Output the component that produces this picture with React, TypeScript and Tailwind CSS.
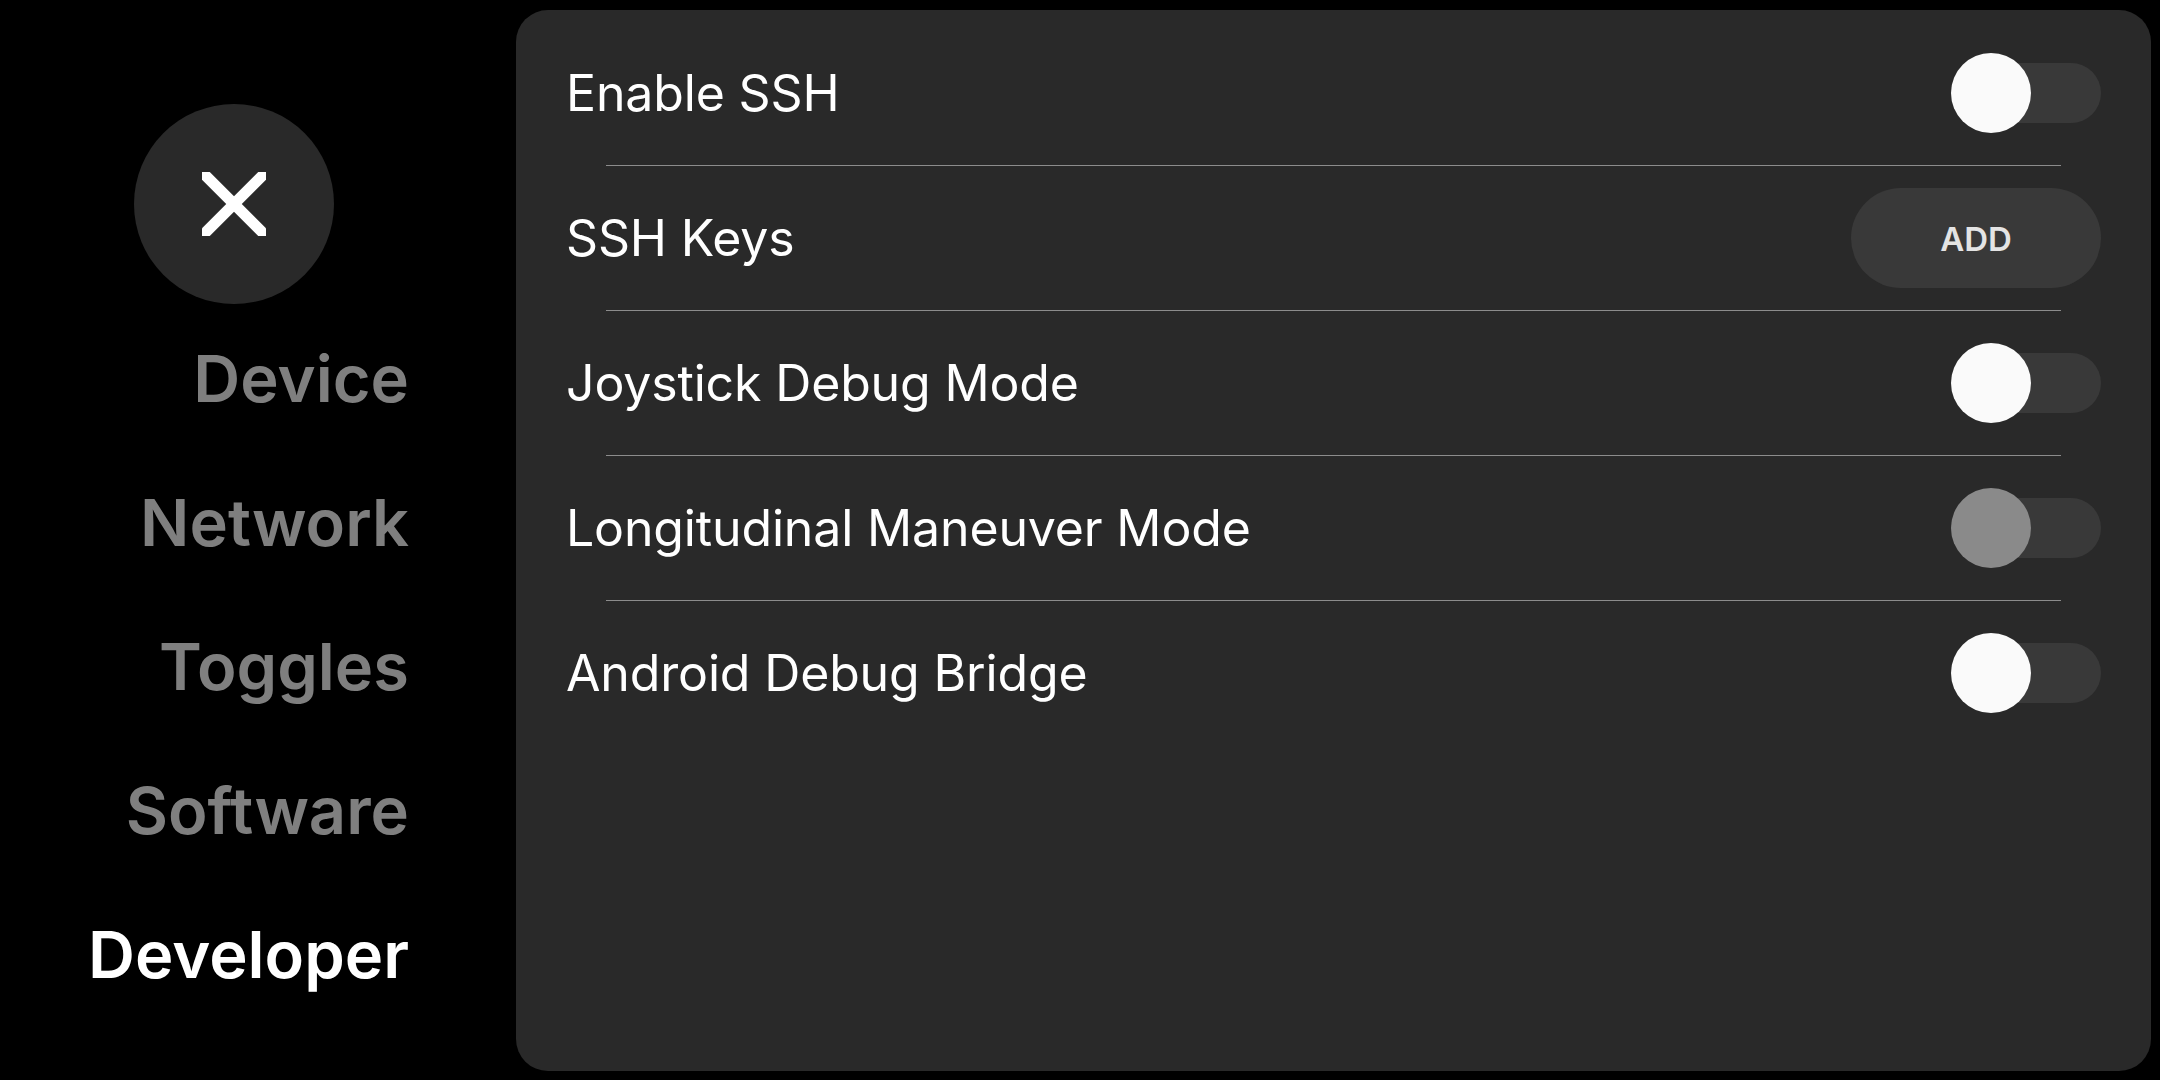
import React from "react";

type Row =
    | { label: string; kind: "toggle"; on?: boolean; disabled?: boolean }
    | { label: string; kind: "button"; action: string };

const rows: Row[] = [
    { label: "Enable SSH", kind: "toggle" },
    { label: "SSH Keys", kind: "button", action: "ADD" },
    { label: "Joystick Debug Mode", kind: "toggle" },
    { label: "Longitudinal Maneuver Mode", kind: "toggle", disabled: true },
    { label: "Android Debug Bridge", kind: "toggle" },
];

const nav = ["Device", "Network", "Toggles", "Software", "Developer"];

function Toggle({ disabled }: { disabled?: boolean }) {
    return (
        <div className="relative flex items-center w-[150px] h-[80px]">
            <div className="h-[60px] w-full rounded-full bg-[#393939]" />
            <div
                className={
                    disabled
                        ? "absolute left-0 top-0 w-[80px] h-[80px] rounded-full bg-[#8a8a8a]"
                        : "absolute left-0 top-0 w-[80px] h-[80px] rounded-full bg-[#fafafa]"
                }
            />
        </div>
    );
}

export default function App() {
    return (
        <div
            className="flex w-[2160px] h-[1080px] bg-black overflow-hidden"
            style={{ fontFamily: "Inter, 'Noto Sans', sans-serif" }}
        >
            {/* sidebar */}
            <div className="flex flex-col w-[516px] shrink-0">
                <button className="mt-[104px] ml-[134px] w-[200px] h-[200px] rounded-full bg-[#292929] flex items-center justify-center">
                    <svg width="64" height="64" viewBox="0 0 64 64" className="overflow-hidden">
                        <line x1="-6" y1="-6" x2="70" y2="70" stroke="white" strokeWidth="11" />
                        <line x1="70" y1="-6" x2="-6" y2="70" stroke="white" strokeWidth="11" />
                    </svg>
                </button>
                <div className="mt-[3px] flex flex-col">
                    {nav.map((item) => (
                        <div
                            key={item}
                            className={
                                item === "Developer"
                                    ? "h-[144px] flex items-center justify-end pr-[107px] text-[65px] font-semibold text-white"
                                    : "h-[144px] flex items-center justify-end pr-[107px] text-[65px] font-semibold text-[#7f7f7f]"
                            }
                        >
                            {item}
                        </div>
                    ))}
                </div>
            </div>

            {/* content panel */}
            <div className="flex-1 mt-[10px] mb-[9px] mr-[9px] rounded-[32px] bg-[#292929] px-[50px] pt-[11px]">
                {rows.map((row, i) => (
                    <div key={row.label}>
                        {i > 0 && <div className="h-px mx-[40px] bg-[#8c8c8c]" />}
                        <div className="h-[144px] flex items-center justify-between">
                            <span className="text-[50px] tracking-[-0.15px] text-white">{row.label}</span>
                            {row.kind === "toggle" ? (
                                <Toggle disabled={row.disabled} />
                            ) : (
                                <button className="w-[250px] h-[100px] pt-[4px] rounded-full bg-[#393939] text-[33px] font-semibold text-[#e4e4e4]">
                                    {row.action}
                                </button>
                            )}
                        </div>
                    </div>
                ))}
            </div>
        </div>
    );
}
